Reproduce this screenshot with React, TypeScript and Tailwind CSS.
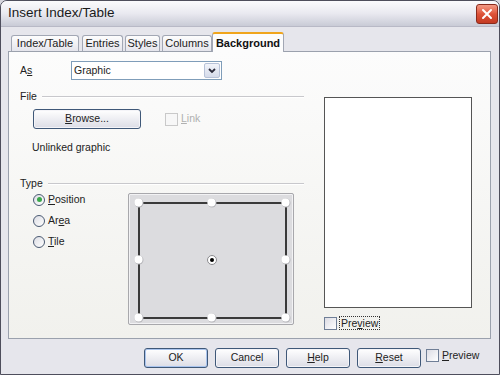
import React from 'react';

const font = { fontFamily: '"Liberation Sans", Arial, sans-serif' };

const U: React.FC<{ children: React.ReactNode }> = ({ children }) => <span className="underline underline-offset-1">{children}</span>;

const Button: React.FC<{ children: React.ReactNode; w?: string; primary?: boolean }> = ({ children, w = 'w-[64px]', primary }) => (
  <div
    className={`${w} h-[20px] flex items-center justify-center rounded-[3px] border border-[#3f5878] bg-gradient-to-b from-[#ffffff] to-[#dcdde6] text-[10.5px] text-[#222] ${
      primary ? 'shadow-[inset_0_0_0_1px_#a9c4ee]' : 'shadow-[inset_0_0_0_1px_#f4f4f8]'
    }`}
  >
    {children}
  </div>
);

const Checkbox: React.FC<{ disabled?: boolean }> = ({ disabled }) => (
  <div
    className={`w-[13px] h-[13px] border ${
      disabled ? 'border-[#c9c9c9] bg-[#f7f7f7]' : 'border-[#6f7e96] bg-gradient-to-br from-[#dcdce4] to-[#ffffff]'
    }`}
  />
);

const Radio: React.FC<{ checked?: boolean }> = ({ checked }) => (
  <div className="w-[12px] h-[12px] rounded-full border border-[#4a5a72] bg-gradient-to-br from-[#dcdde4] to-[#ffffff] flex items-center justify-center">
    {checked && <div className="w-[5px] h-[5px] rounded-full bg-[#3aa84a]" />}
  </div>
);

const Tab: React.FC<{ label: string; w: string; ml?: string }> = ({ label, w, ml = '' }) => (
  <div
    className={`${w} ${ml} h-[16px] flex items-center justify-center border border-b-0 border-[#a2a7b4] rounded-t-[3px] bg-gradient-to-b from-[#fdfdfd] to-[#e5e5ec] text-[11px] text-[#222]`}
  >
    {label}
  </div>
);

const SectionHead: React.FC<{ label: string }> = ({ label }) => (
  <div className="flex items-center h-[13px] text-[10.5px] text-[#222]">
    <span>{label}</span>
    <div className="flex-1 ml-[5px] h-[2px] border-t border-[#c8c8cc] border-b border-b-white" />
  </div>
);

const Handle: React.FC<{ cx: number; cy: number }> = ({ cx, cy }) => (
  <g>
    <circle cx={cx} cy={cy} r={4.5} fill="#b8b8bc" />
    <circle cx={cx - 0.5} cy={cy - 0.5} r={4} fill="#ffffff" />
  </g>
);

const PositionPicker: React.FC = () => {
  const xs = [10, 83, 157];
  const ys = [9, 66, 124];
  return (
    <div className="w-[166px] h-[132px] border border-[#a8a8ac] rounded-[2px] bg-[#dcdcdf] shadow-[inset_0_0_0_1px_#f2f2f4]">
      <svg width="164" height="130" viewBox="0 0 164 130">
        <rect x={10} y={9} width={147} height={115} fill="none" stroke="#3a3a3a" strokeWidth={2} />
        {ys.map((y) => xs.map((x) => (x === 83 && y === 66 ? null : <Handle key={`${x}-${y}`} cx={x} cy={y} />)))}
        <circle cx={83} cy={66} r={4.5} fill="#ffffff" stroke="#8a8a8e" strokeWidth={1} />
        <circle cx={83} cy={66} r={2} fill="#000" />
      </svg>
    </div>
  );
};

const App: React.FC = () => {
  return (
    <div style={font} className="w-[500px] h-[375px] bg-[#d6d6de]">
      <div className="w-full h-full flex flex-col border border-[#4e4e5c] rounded-t-[7px] bg-[#e6e6ec] overflow-hidden">
        {/* title bar */}
        <div className="h-[26px] flex items-center justify-between pl-[7px] pr-[1px] bg-gradient-to-b from-[#fbfbfd] via-[#e9e9f0] to-[#c9cbd6] border-b border-[#b8b9c6]">
          <span className="text-[13.5px] text-[#1a1a1a]">Insert Index/Table</span>
          <div className="w-[22px] h-[20px] rounded-[3px] border border-[#8a2a1c] bg-gradient-to-b from-[#f39a86] via-[#de5238] to-[#c43a22] flex items-center justify-center">
            <svg width="12" height="12" viewBox="0 0 12 12">
              <path d="M2 2 L10 10 M10 2 L2 10" stroke="#fff" strokeWidth={2} strokeLinecap="round" />
            </svg>
          </div>
        </div>

        {/* body */}
        <div className="flex-1 flex flex-col pl-[7px] pr-[8px]">
          {/* tabs */}
          <div className="mt-[5px] h-[19px] flex items-end pl-[3px] relative z-10">
            <Tab label="Index/Table" w="w-[68px]" />
            <Tab label="Entries" w="w-[41px]" ml="ml-[3px]" />
            <Tab label="Styles" w="w-[35px]" ml="ml-[2px]" />
            <Tab label="Columns" w="w-[50px]" ml="ml-[2px]" />
            <div className="w-[72px] h-[20px] -mb-px flex items-center justify-center border border-b-0 border-[#a2a7b4] border-t-2 border-t-[#f0a51c] rounded-t-[3px] bg-[#fcfcfc] text-[11px] font-bold text-[#111]">
              Background
            </div>
          </div>

          {/* panel */}
          <div className="h-[288px] flex border border-[#9ba1ad] bg-gradient-to-b from-[#fcfcfc] to-[#f1f1ed] pl-[11px]">
            {/* left column */}
            <div className="w-[284px] flex flex-col text-[10.5px] text-[#222]">
              <div className="mt-[9px] flex items-center h-[19px]">
                <span className="w-[51px]">
                  A<U>s</U>
                </span>
                <div className="w-[151px] h-[19px] flex items-center justify-between border border-[#7f9db9] bg-white pl-[2px] pr-[1px]">
                  <span>Graphic</span>
                  <div className="w-[16px] h-[15px] flex items-center justify-center rounded-[2px] border border-[#b7c2d8] bg-gradient-to-b from-[#f2f4fa] to-[#d5dbea]">
                    <svg width="8" height="6" viewBox="0 0 8 6">
                      <path d="M1 1 L4 4 L7 1" stroke="#2b2b3b" strokeWidth={1.8} fill="none" />
                    </svg>
                  </div>
                </div>
              </div>

              <div className="mt-[10px]">
                <SectionHead label="File" />
              </div>

              <div className="mt-[6px] ml-[13px] flex items-center">
                <Button w="w-[108px]">
                  <span>
                    <U>B</U>rowse...
                  </span>
                </Button>
                <div className="ml-[24px] flex items-center gap-[3px] text-[#b0b0b0]">
                  <Checkbox disabled />
                  <span>
                    <U>L</U>ink
                  </span>
                </div>
              </div>

              <div className="mt-[12px] ml-[12px] h-[13px] leading-[13px]">Unlinked graphic</div>

              <div className="mt-[23px]">
                <SectionHead label="Type" />
              </div>

              <div className="mt-[3px] flex">
                <div className="w-[108px] pl-[13px] flex flex-col gap-[8px]">
                  <div className="h-[13px] flex items-center gap-[3px]">
                    <Radio checked />
                    <span>
                      <U>P</U>osition
                    </span>
                  </div>
                  <div className="h-[13px] flex items-center gap-[3px]">
                    <Radio />
                    <span>
                      Ar<U>e</U>a
                    </span>
                  </div>
                  <div className="h-[13px] flex items-center gap-[3px]">
                    <Radio />
                    <span>
                      <U>T</U>ile
                    </span>
                  </div>
                </div>
                <PositionPicker />
              </div>
            </div>

            {/* right column */}
            <div className="ml-[20px] flex flex-col">
              <div className="mt-[45px] w-[148px] h-[211px] border border-[#555] bg-white" />
              <div className="mt-[8px] flex items-center gap-[2px] text-[10.5px] text-[#222]">
                <Checkbox />
                <span className="px-[1px] border border-dotted border-[#333] leading-[12px]">
                  Pre<U>v</U>iew
                </span>
              </div>
            </div>
          </div>

          {/* buttons */}
          <div className="mt-[9px] pl-[136px] flex items-start">
            <div className="flex gap-[7px]">
              <Button primary>OK</Button>
              <Button>Cancel</Button>
              <Button>
                <span>
                  <U>H</U>elp
                </span>
              </Button>
              <Button>
                <span>
                  <U>R</U>eset
                </span>
              </Button>
            </div>
            <div className="ml-[5px] flex items-center gap-[3px] text-[10.5px] text-[#222]">
              <Checkbox />
              <span>
                <U>P</U>review
              </span>
            </div>
          </div>
        </div>
      </div>
    </div>
  );
};

export default App;
